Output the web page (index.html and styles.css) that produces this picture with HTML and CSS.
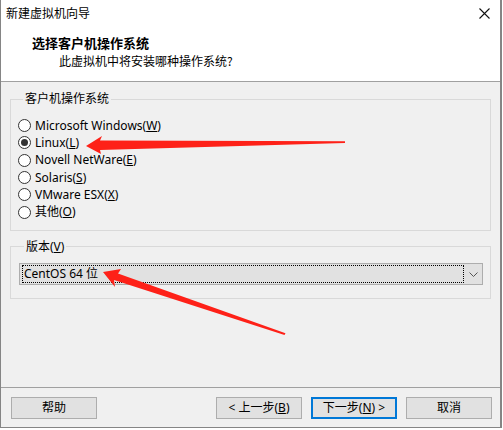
FILE: index.html
```html
<!DOCTYPE html>
<html>
<head>
<meta charset="utf-8">
<link rel="stylesheet" href="styles.css">
</head>
<body>
<div class="window">
  <div class="titlebar">
    <span class="title">新建虚拟机向导</span>
    <svg class="close" width="11" height="11" viewBox="0 0 11 11"><path d="M0.5 0.5 L10.5 10.5 M10.5 0.5 L0.5 10.5" stroke="#111" stroke-width="1.1" fill="none"/></svg>
  </div>
  <div class="header">
    <div class="h-title">选择客户机操作系统</div>
    <div class="h-sub">此虚拟机中将安装哪种操作系统?</div>
  </div>
  <div class="content">
    <fieldset class="group g-os">
      <legend>客户机操作系统</legend>
      <div class="radio-list">
        <div class="radio-row"><span class="radio"></span><span>Microsoft Windows(<u>W</u>)</span></div>
        <div class="radio-row"><span class="radio checked"></span><span>Linux(<u>L</u>)</span></div>
        <div class="radio-row"><span class="radio"></span><span>Novell NetWare(<u>E</u>)</span></div>
        <div class="radio-row"><span class="radio"></span><span>Solaris(<u>S</u>)</span></div>
        <div class="radio-row"><span class="radio"></span><span>VMware ESX(<u>X</u>)</span></div>
        <div class="radio-row"><span class="radio"></span><span>其他(<u>O</u>)</span></div>
      </div>
    </fieldset>
    <fieldset class="group g-ver">
      <legend>版本(<u>V</u>)</legend>
      <div class="select">
        <span class="select-focus">CentOS 64 位</span>
        <span class="select-btn"><svg width="9" height="5" viewBox="0 0 9 5"><path d="M0.5 0.5 L4.5 4.5 L8.5 0.5" stroke="#555" stroke-width="1" fill="none"/></svg></span>
      </div>
    </fieldset>
  </div>
  <div class="footer">
    <button class="btn">帮助</button>
    <div class="spacer"></div>
    <button class="btn">&lt; 上一步(<u>B</u>)</button>
    <button class="btn default">下一步(<u>N</u>) &gt;</button>
    <button class="btn">取消</button>
  </div>
</div>
<svg class="arrows" width="503" height="430" viewBox="0 0 503 430">
  <polygon points="86,146 102,136 100,140.5 345,141.2 345,143 100,150 101,154" fill="#fe2118"/>
  <polygon points="103,272 121,269 118,273.5 285.5,333.3 284.5,335 114,280 115,287" fill="#fe2118"/>
</svg>
</body>
</html>
```
FILE: styles.css
```css
* { box-sizing: border-box; }
html, body {
  margin: 0;
  padding: 0;
  background: #ffffff;
}
body {
  width: 503px;
  height: 430px;
  position: relative;
  font-family: "Noto Sans", "Noto Sans CJK SC", sans-serif;
  font-size: 12px;
  color: #000;
  overflow: hidden;
}
.window {
  width: 502px;
  height: 428px;
  background: #f0f0f0;
  border-left: 1px solid #858585;
  border-right: 2px solid #858585;
  border-bottom: 1px solid #858585;
  display: flex;
  flex-direction: column;
}
.titlebar {
  height: 27px;
  background: #fff;
  display: flex;
  justify-content: space-between;
  align-items: flex-start;
  padding: 0 10px 0 5px;
}
.title {
  font-family: "Noto Sans CJK SC", sans-serif;
  font-size: 12px;
  line-height: 25px;
}
.close { margin-top: 8px; }
.header {
  height: 55px;
  background: #fff;
  border-bottom: 1px solid #a0a0a0;
  padding: 7px 0 0 31px;
}
.h-title {
  font-family: "Noto Sans CJK SC", sans-serif;
  font-weight: bold;
  font-size: 13px;
  line-height: 17px;
}
.h-sub {
  font-family: "Noto Sans CJK SC", sans-serif;
  font-size: 12px;
  line-height: 19px;
  padding-left: 27px;
}
.content {
  flex: 1;
  padding: 0 9px;
}
.group {
  margin: 0;
  border: 1px solid #d9d9d9;
  min-width: 0;
}
.group legend {
  padding: 0 2px;
  margin-left: 5px;
  line-height: 16px;
  height: 16px;
  font-size: 12px;
}
.g-os {
  margin-top: 9px;
  padding: 10px 0 9px 7px;
}
.radio-row {
  height: 17.3px;
  display: flex;
  align-items: center;
  line-height: 16px;
  white-space: nowrap;
}
.radio {
  width: 13px;
  height: 13px;
  border: 1px solid #333;
  border-radius: 50%;
  background: #fff;
  margin-right: 4px;
  flex: 0 0 13px;
  display: flex;
  align-items: center;
  justify-content: center;
}
.radio.checked::after {
  content: "";
  width: 7px;
  height: 7px;
  border-radius: 50%;
  background: #333;
}
u { text-underline-offset: 1px; }
.g-ver {
  margin-top: 8px;
  padding: 8px 7px 13px 8px;
}
.select {
  height: 22px;
  background: #e1e1e1;
  border: 1px solid #adadad;
  display: flex;
  padding: 1px 0 1px 2px;
}
.select-focus {
  width: 442px;
  height: 18px;
  border: 1px dotted #000;
  line-height: 16px;
  padding-left: 1px;
  white-space: nowrap;
}
.select-btn {
  flex: 1;
  display: flex;
  align-items: center;
  justify-content: center;
  padding-top: 1px;
}
.footer {
  border-top: 1px solid #a0a0a0;
  display: flex;
  gap: 9px;
  padding: 9px 8px 8px 10px;
}
.spacer { flex: 1; }
.btn {
  width: 86px;
  height: 22px;
  border: 1px solid #adadad;
  background: #e1e1e1;
  font-family: "Noto Sans", "Noto Sans CJK SC", sans-serif;
  font-size: 12px;
  line-height: 18px;
  padding: 0;
  color: #000;
  white-space: nowrap;
}
.btn.default {
  border: 2px solid #0078d7;
}
.arrows {
  position: absolute;
  left: 0;
  top: 0;
  pointer-events: none;
}
```
